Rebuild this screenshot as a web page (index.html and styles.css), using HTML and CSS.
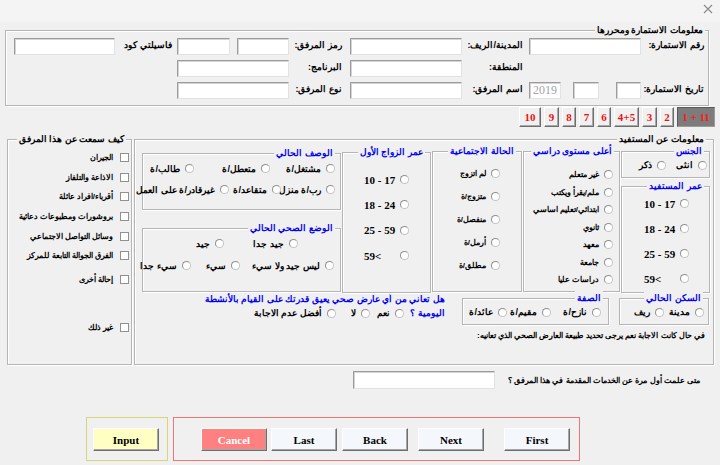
FILE: index.html
```html
<!DOCTYPE html>
<html lang="ar" dir="rtl">
<head>
<meta charset="utf-8">
<title>Form</title>
<link rel="stylesheet" href="styles.css">
</head>
<body>
<div class="titlebar"><svg class="close" viewBox="0 0 10 10" width="10" height="10"><path d="M1 1L9 9M9 1L1 9" stroke="#8a8a8a" stroke-width="1.1" fill="none"/></svg></div>

<div class="group info">
  <span class="legend lg-info">معلومات الاستمارة ومحررها</span>
  <div class="info-grid">
    <div class="lbl l1">رقم الاستمارة:</div>
    <div class="tb"></div>
    <div class="lbl l3">المدينة/الريف:</div>
    <div class="tb"></div>
    <div class="lbl l5">رمز المرفق:</div>
    <div class="split"><div class="tb"></div><div class="tb"></div></div>
    <div class="lbl l7">فاسيلتي كود</div>
    <div class="tb"></div>

    <div></div><div></div>
    <div class="lbl l3">المنطقة:</div>
    <div class="tb"></div>
    <div class="lbl l5">البرنامج:</div>
    <div class="tb"></div>
    <div></div><div></div>

    <div class="lbl l1">تاريخ الاستمارة:</div>
    <div class="date"><div class="tb d1"></div><div class="tb d2"></div><div class="tb d3" dir="ltr">2019</div></div>
    <div class="lbl l3">اسم المرفق:</div>
    <div class="tb"></div>
    <div class="lbl l5">نوع المرفق:</div>
    <div class="tb"></div>
  </div>
</div>

<div class="tabs">
  <div class="tab on t1" dir="ltr">1 + 11</div>
  <div class="tab t2">2</div>
  <div class="tab t3">3</div>
  <div class="tab t4" dir="ltr">4+5</div>
  <div class="tab t2">6</div>
  <div class="tab t3">7</div>
  <div class="tab t2">8</div>
  <div class="tab t3">9</div>
  <div class="tab t10">10</div>
</div>

<div class="main-row">
  <div class="group mainbox">
    <span class="legend lg-main">معلومات عن المستفيد</span>
    <div class="cols">
      <div class="col-a">
        <div class="group sex">
          <span class="legend blue">الجنس</span>
          <div class="rb sx1"><span class="r"></span>انثى</div>
          <div class="rb"><span class="r"></span>ذكر</div>
        </div>
        <div class="group age">
          <span class="legend blue">عمر المستفيد</span>
          <div class="rb num a-item"><span class="r"></span><span class="n" dir="ltr">10 - 17</span></div>
          <div class="rb num a-item"><span class="r"></span><span class="n" dir="ltr">18 - 24</span></div>
          <div class="rb num a-item"><span class="r"></span><span class="n" dir="ltr">25 - 59</span></div>
          <div class="rb num a-item"><span class="r"></span><span class="n" dir="ltr">59&lt;</span></div>
        </div>
      </div>

      <div class="group col-b">
        <span class="legend blue">أعلى مستوى دراسي</span>
        <div class="rb"><span class="r"></span>غير متعلم</div>
        <div class="rb"><span class="r"></span>ملم/يقرأ ويكتب</div>
        <div class="rb"><span class="r"></span>ابتدائي/تعليم اساسي</div>
        <div class="rb"><span class="r"></span>ثانوي</div>
        <div class="rb"><span class="r"></span>معهد</div>
        <div class="rb"><span class="r"></span>جامعة</div>
        <div class="rb"><span class="r"></span>دراسات عليا</div>
      </div>

      <div class="group col-c">
        <span class="legend blue">الحالة الاجتماعية</span>
        <div class="rb"><span class="r"></span>لم اتزوج</div>
        <div class="rb"><span class="r"></span>متزوج/ة</div>
        <div class="rb"><span class="r"></span>منفصل/ة</div>
        <div class="rb"><span class="r"></span>أرمل/ة</div>
        <div class="rb"><span class="r"></span>مطلق/ة</div>
      </div>

      <div class="group col-d">
        <span class="legend blue">عمر الزواج الأول</span>
        <div class="rb num"><span class="r"></span><span class="n" dir="ltr">10 - 17</span></div>
        <div class="rb num"><span class="r"></span><span class="n" dir="ltr">18 - 24</span></div>
        <div class="rb num"><span class="r"></span><span class="n" dir="ltr">25 - 59</span></div>
        <div class="rb num"><span class="r"></span><span class="n" dir="ltr">59&lt;</span></div>
      </div>

      <div class="col-e">
        <div class="group work">
          <span class="legend blue">الوصف الحالي</span>
          <div class="line">
            <div class="rb w65"><span class="r"></span>مشتغل/ة</div>
            <div class="rb w76"><span class="r"></span>متعطل/ة</div>
            <div class="rb"><span class="r"></span>طالب/ة</div>
          </div>
          <div class="line">
            <div class="rb w54"><span class="r"></span>رب/ة منزل</div>
            <div class="rb w52"><span class="r"></span>متقاعد/ة</div>
            <div class="rb"><span class="r"></span>غيرقادر/ة على العمل</div>
          </div>
        </div>
        <div class="group health">
          <span class="legend blue">الوضع الصحي الحالي</span>
          <div class="line indent">
            <div class="rb w74"><span class="r"></span>جيد جدا</div>
            <div class="rb"><span class="r"></span>جيد</div>
          </div>
          <div class="line line2">
            <div class="rb w94"><span class="r"></span>ليس جيد ولا سيء</div>
            <div class="rb w49"><span class="r"></span>سيء</div>
            <div class="rb"><span class="r"></span>سيء جدا</div>
          </div>
        </div>
      </div>
    </div>

    <div class="row2">
      <div class="group home">
        <span class="legend blue">السكن الحالي</span>
        <div class="rb w40"><span class="r"></span>مدينة</div>
        <div class="rb"><span class="r"></span>ريف</div>
      </div>
      <div class="group status">
        <span class="legend blue">الصفة</span>
        <div class="rb w50"><span class="r"></span>نازح/ة</div>
        <div class="rb w44"><span class="r"></span>مقيم/ة</div>
        <div class="rb"><span class="r"></span>عائد/ة</div>
      </div>
      <div class="question">
        <div class="q-line blue">هل تعاني من أي عارض صحي يعيق قدرتك على القيام بالأنشطة</div>
        <div class="q-opts">
          <span class="q-end blue">اليومية ؟</span>
          <div class="rb w34"><span class="r"></span>نعم</div>
          <div class="rb w34"><span class="r"></span>لا</div>
          <div class="rb"><span class="r"></span>أفضل عدم الاجابة</div>
        </div>
      </div>
    </div>

    <div class="note">في حال كانت الاجابة نعم يرجى تحديد طبيعة العارض الصحي الذي تعانيه:</div>
  </div>

  <div class="group hear">
    <span class="legend lg-hear">كيف سمعت عن هذا المرفق</span>
    <div class="cb"><span class="box"></span>الجيران</div>
    <div class="cb"><span class="box"></span>الاذاعة والتلفاز</div>
    <div class="cb"><span class="box"></span>أقرباء/افراد عائلة</div>
    <div class="cb"><span class="box"></span>بروشورات ومطبوعات دعائية</div>
    <div class="cb"><span class="box"></span>وسائل التواصل الاجتماعي</div>
    <div class="cb"><span class="box"></span>الفرق الجوالة التابعة للمركز</div>
    <div class="cb cb-other"><span class="box"></span>إحالة أخرى</div>
    <div class="cb cb-else"><span class="box"></span>غير ذلك</div>
  </div>
</div>

<div class="when">
  <div class="when-lbl">متى علمت أول مرة عن الخدمات المقدمة في هذا المرفق ؟</div>
  <div class="tb when-tb"></div>
</div>

<div class="actions" dir="ltr">
  <div class="frame yellow">
    <button class="btn input">Input</button>
  </div>
  <div class="frame red">
    <button class="btn cancel">Cancel</button>
    <button class="btn last">Last</button>
    <button class="btn back">Back</button>
    <button class="btn next">Next</button>
    <button class="btn first">First</button>
  </div>
</div>
</body>
</html>
```

FILE: styles.css
```css
* { box-sizing: border-box; }
html, body { margin: 0; padding: 0; }
body {
  width: 720px;
  height: 465px;
  overflow: hidden;
  background: #f0f0f0;
  font-family: "Liberation Sans", sans-serif;
  font-size: 8px;
  font-weight: bold;
  color: #000;
}

.titlebar {
  height: 22px;
  background: #f4f4f4;
  direction: ltr;
  display: flex;
  justify-content: flex-end;
  padding: 4px 7px 0 0;
}
.close { display: block; }

.group {
  position: relative;
  border: 1px solid #b5b5b5;
  box-shadow: inset 1px 1px 0 #ffffff, 1px 1px 0 #ffffff;
}
.legend {
  position: absolute;
  top: -8px;
  right: 5px;
  padding: 0 2px;
  font-size: 9px;
  line-height: 14px;
  background: #f0f0f0;
  white-space: nowrap;
}
.blue { color: #0000f0; }
.lg-info { right: 3px; }
.lg-main { right: 7px; }
.lg-hear { right: 5px; }

/* first section */
.info {
  margin: 8px 11px 0 0;
  width: 704px;
  height: 76px;
  padding: 7px 3px 0 0;
}
.info-grid {
  display: grid;
  grid-template-columns: 64px 112px 67px 112px 61px 112px 62px 101px;
  grid-template-rows: 17px 17px 17px;
  row-gap: 5px;
}
.lbl {
  display: flex;
  align-items: center;
  white-space: nowrap;
  font-size: 9px;
  line-height: 12px;
  padding-bottom: 3px;
}
.l1 { padding-right: 1px; }
.l3 { padding-right: 6px; }
.l5 { padding-right: 8px; }
.l7 { padding-right: 5px; }

.tb {
  background: #fff;
  border: 1px solid;
  border-color: #9c9c9c #e2e2e2 #e2e2e2 #9c9c9c;
  box-shadow: inset 1px 1px 0 #d4d4d4;
  height: 17px;
}
.split { display: flex; gap: 7px; }
.split .tb { flex: 1; }
.date { display: flex; }
.d1 { width: 25px; }
.d2 { width: 26px; margin-right: 17px; }
.d3 {
  width: 32px;
  margin-right: 12px;
  font: 12px "Liberation Serif", serif;
  color: #a3a3a3;
  text-align: center;
  line-height: 15px;
}

/* tab buttons */
.tabs {
  display: flex;
  gap: 3px;
  height: 20px;
  margin-top: 1px;
  padding-right: 5px;
}
.tab {
  height: 20px;
  background: #f0f0f0;
  border: 1px solid;
  border-color: #ffffff #6d6d6d #6d6d6d #ffffff;
  box-shadow: inset -1px -1px 0 #a8a8a8;
  color: #f01010;
  font: bold 11px "Liberation Serif", serif;
  display: flex;
  align-items: center;
  justify-content: center;
  white-space: nowrap;
}
.tab.on {
  background: #7c7c7c;
  border-color: #5a5a5a #9a9a9a #9a9a9a #5a5a5a;
  box-shadow: none;
  color: #ff1a1a;
}
.t1 { width: 38px; }
.t2 { width: 14px; }
.t3 { width: 15px; }
.t4 { width: 25px; }
.t10 { width: 22px; }

/* main row */
.main-row {
  display: flex;
  gap: 2px;
  margin-top: 12px;
  height: 226px;
  padding-right: 6px;
}
.mainbox {
  width: 580px;
  height: 226px;
  padding: 11px 3px 0 0;
}
.cols {
  display: flex;
  gap: 1px;
  height: 142px;
}
.col-a {
  width: 89px;
  display: flex;
  flex-direction: column;
  gap: 8px;
}
.sex {
  height: 27px;
  display: flex;
  align-items: center;
  padding: 1px 2px 0 0;
  font-size: 9px;
}
.age {
  height: 107px;
  padding: 4px 20px 0 0;
}
.a-item { height: 25px; }

.rb {
  display: flex;
  align-items: center;
  gap: 5px;
  white-space: nowrap;
  flex: none;
}
.r {
  width: 9px;
  height: 9px;
  border-radius: 50%;
  border: 1px solid;
  border-color: #8f8f8f #c4c4c4 #c4c4c4 #8f8f8f;
  background: #fff;
  flex: none;
}
.num { gap: 4px; }
.n {
  width: 32px;
  text-align: left;
  font: bold 11px "Liberation Serif", serif;
}

.col-b {
  width: 97px;
  height: 141px;
  padding: 14px 6px 0 0;
}
.col-b .rb { height: 17.5px; }

.col-c {
  width: 90px;
  height: 141px;
  padding: 10px 21px 0 0;
}
.col-c .rb { height: 23px; }

.col-d {
  width: 89px;
  height: 141px;
  margin-top: 1px;
  padding: 14px 21px 0 0;
}
.col-d .rb { height: 25.3px; }

.col-e {
  width: 199px;
  display: flex;
  flex-direction: column;
  padding-top: 2px;
  font-size: 9px;
}
.work {
  height: 57px;
  padding: 4px 5px 0 0;
}
.line {
  display: flex;
  height: 21px;
}
.health {
  height: 64px;
  margin-top: 18px;
  padding: 4px 6px 0 0;
}
.indent { padding-right: 36px; }
.line2 { margin-top: 1px; }

.w34 { width: 34px; }
.w40 { width: 40px; }
.w44 { width: 44px; }
.w49 { width: 49px; }
.w50 { width: 50px; }
.w52 { width: 52px; }
.w54 { width: 54px; }
.w65 { width: 65px; }
.w74 { width: 74px; }
.w76 { width: 76px; }
.w94 { width: 94px; }
.sx1 { width: 41px; }

.row2 {
  display: flex;
  margin-top: 5px;
  height: 27px;
  font-size: 9px;
}
.home {
  width: 90px;
  margin-right: 1px;
  display: flex;
  align-items: center;
  padding: 1px 4px 0 0;
}
.status {
  width: 147px;
  margin-right: 10px;
  display: flex;
  align-items: center;
  padding: 1px 7px 0 0;
}
.question {
  margin-right: 17px;
  margin-top: -6px;
  line-height: 14px;
}
.q-line { white-space: nowrap; }
.q-opts {
  display: flex;
  align-items: center;
  height: 14px;
}
.q-end { width: 41px; white-space: nowrap; }

.note {
  margin-top: 4px;
  margin-right: 5px;
  line-height: 14px;
  white-space: nowrap;
}

/* left box */
.hear {
  width: 125px;
  height: 226px;
  padding: 8px 2px 0 0;
}
.cb {
  display: flex;
  align-items: center;
  gap: 7px;
  height: 19.6px;
  white-space: nowrap;
}
.box {
  width: 9px;
  height: 9px;
  border: 1px solid #909090;
  background: #fff;
  flex: none;
}
.cb-other { margin-top: 4.6px; }
.cb-else { margin-top: 28.4px; }

/* when row */
.when {
  display: flex;
  margin-top: 6px;
  padding-right: 20px;
  height: 18px;
}
.when-lbl {
  width: 205px;
  display: flex;
  align-items: center;
  white-space: nowrap;
}
.when-tb { width: 142px; height: 18px; }

/* bottom actions */
.actions {
  display: flex;
  margin-top: 28px;
  padding-left: 86px;
  gap: 5px;
}
.frame {
  height: 44px;
  border: 1px solid;
  display: flex;
  align-items: flex-start;
  padding-top: 10px;
}
.yellow {
  width: 82px;
  border-color: #d6d676;
  padding-left: 6px;
}
.red {
  width: 407px;
  border-color: #f07676;
  padding-left: 27px;
}
.btn {
  width: 66px;
  height: 23px;
  margin: 0;
  padding: 0;
  border: 1px solid;
  border-color: #ffffff #6e6e6e #6e6e6e #ffffff;
  box-shadow: inset -1px -1px 0 #a6a6a6;
  background: #f4f7fb;
  font: bold 11px "Liberation Serif", serif;
  color: #000;
  flex: none;
}
.input { background: #ffffc4; }
.cancel { background: #ff8080; color: #fff; }
.last { margin-left: 4px; }
.back { margin-left: 5px; }
.next { margin-left: 10px; }
.first { margin-left: 20px; }
```
